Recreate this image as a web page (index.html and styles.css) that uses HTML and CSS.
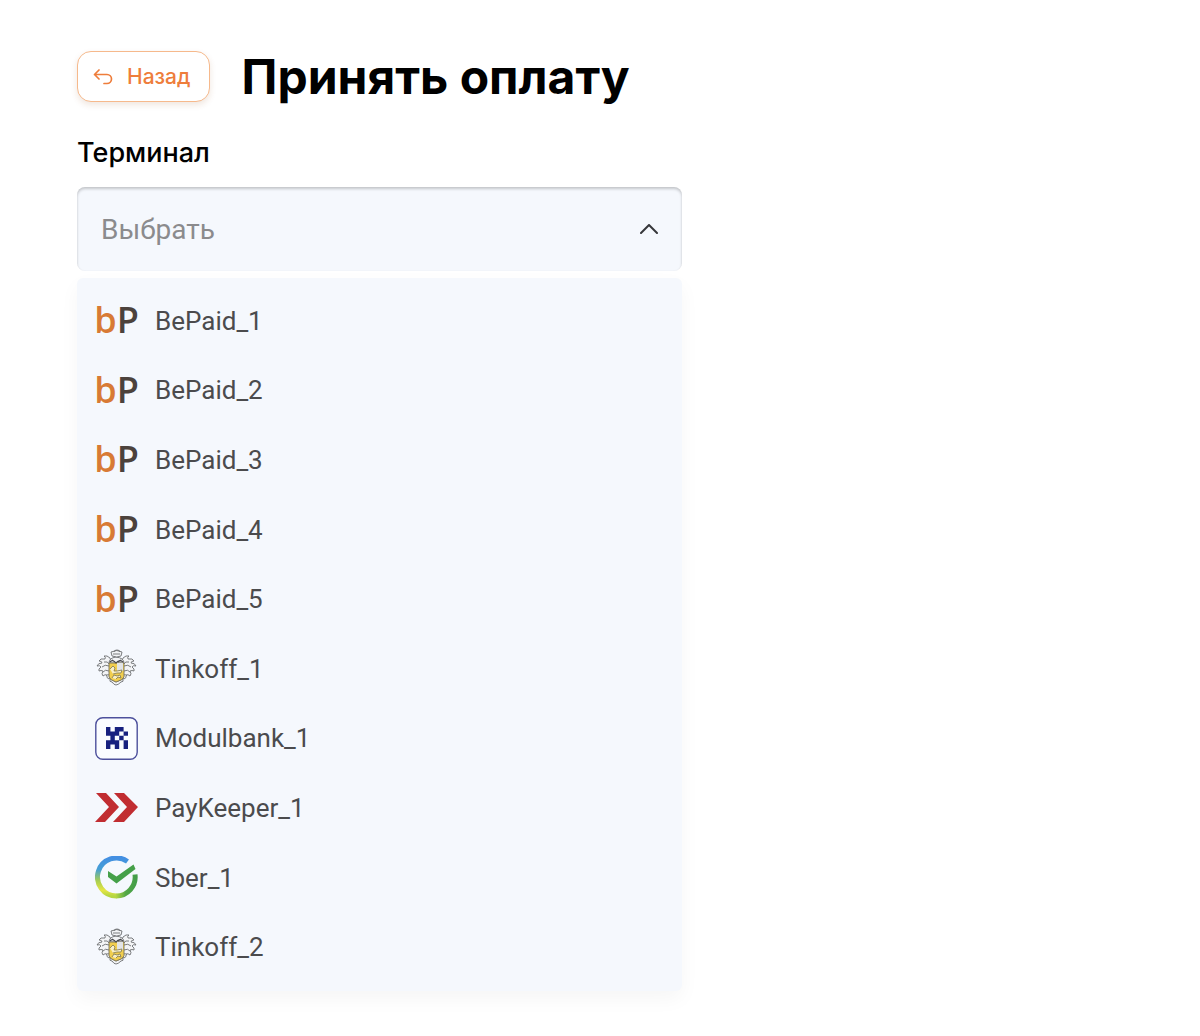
FILE: index.html
```html
<!DOCTYPE html>
<html lang="ru">
<head>
    <meta charset="UTF-8">
    <meta name="viewport" content="width=device-width, initial-scale=1.0">
    <title>Принять оплату</title>
    <link rel="stylesheet" href="styles.css">
</head>
<body>
    <!-- Общие иконки -->
    <svg class="sprite" aria-hidden="true">
        <symbol id="icon-tinkoff" viewBox="0 0 43 43">
            <g fill="#f3f4f6" stroke="#6d6f72" stroke-width="0.9" stroke-linejoin="round">
                <path d="M15 11q-3-3-6-2 2 1 1 3-5-1-6 2 3 0 3 2-4 0-5 3 3-1 4 1-3 2-2 4 2-1 4 0-2 3 0 5 2-2 4-1-1 3 2 4 1-2 3-1l2-8z"/>
                <path d="M28 11q3-3 6-2-2 1-1 3 5-1 6 2-3 0-3 2 4 0 5 3-3-1-4 1 3 2 2 4-2-1-4 0 2 3 0 5-2-2-4-1 1 3-2 4-1-2-3-1l-2-8z"/>
                <path d="M7 20q3-3 7-1M8 25q2-3 6-1M11 29q1-2 4-1M9 15q4-1 5 2"/>
                <path d="M36 20q-3-3-7-1M35 25q-2-3-6-1M32 29q-1-2-4-1M34 15q-4-1-5 2"/>
                <path d="M14 16q0-5 7-6 8 1 8 6z"/>
                <path d="M17 9l-1-4q6-3 11 0l-1 4q-4 2-9 0zM19 5q0-2 3-2t3 2M18 7h7"/>
                <path d="M15 32q-1 3 2 3 2 3 4 3t5-3q3 0 2-3l-7 3z"/>
            </g>
            <path d="M14 16h15v14q-1 3-8 5-6-2-7-5z" fill="#f1ce4e" stroke="#77715a" stroke-width="0.9"/>
            <path d="M22 16h6v8h-6z" fill="#e2e4e7"/>
            <path d="M15 22l3-3 2 2-1 3 3 0 5-1-1 3-4 0-4 1M17 31l2-3 3 1 3-1 1 3-3-1-2 2" fill="#f8efc8" stroke="#7d7652" stroke-width="0.8"/>
            <path d="M15 15q3-3 6 1 3-4 7-1M17 13l3 2M26 13l-3 2" fill="none" stroke="#48494c" stroke-width="1.2"/>
        </symbol>
    </svg>

    <main class="page">
        <header class="header">
            <button type="button" class="back-btn">
                <svg class="back-icon" viewBox="0 0 20 16" aria-hidden="true">
                    <path d="M6 1L1.5 5.5 6 10M1.5 5.5H14a4.5 4.5 0 0 1 0 9h-3"/>
                </svg>
                Назад
            </button>
            <h1>Принять оплату</h1>
        </header>

        <div class="form-group">
            <label for="terminal">Терминал</label>
            <div class="select-box">
                <select id="terminal">
                    <option value="">Выбрать</option>
                </select>
                <svg class="chevron" viewBox="0 0 18 10" aria-hidden="true">
                    <path d="M1 9l8-8 8 8"/>
                </svg>
            </div>

            <ul class="options">
                <li><button type="button" class="option"><span class="logo bepaid" aria-hidden="true"><span>b</span><b>P</b></span>BePaid_1</button></li>
                <li><button type="button" class="option"><span class="logo bepaid" aria-hidden="true"><span>b</span><b>P</b></span>BePaid_2</button></li>
                <li><button type="button" class="option"><span class="logo bepaid" aria-hidden="true"><span>b</span><b>P</b></span>BePaid_3</button></li>
                <li><button type="button" class="option"><span class="logo bepaid" aria-hidden="true"><span>b</span><b>P</b></span>BePaid_4</button></li>
                <li><button type="button" class="option"><span class="logo bepaid" aria-hidden="true"><span>b</span><b>P</b></span>BePaid_5</button></li>
                <li><button type="button" class="option"><svg class="logo" aria-hidden="true"><use href="#icon-tinkoff"/></svg>Tinkoff_1</button></li>
                <li>
                    <button type="button" class="option">
                        <svg class="logo" viewBox="0 0 43 43" aria-hidden="true">
                            <rect x="0.8" y="0.8" width="41.4" height="41.4" rx="7" fill="#fafcff" stroke="#4d509c" stroke-width="1.4"/>
                            <path transform="translate(11 10) scale(4.4)" fill="#17207f" d="M0 0h1v1h-1zM2 0h2v1h-2zM0 1h3v1h-3zM4 1h1v1h-1zM1 2h1v1h-1zM3 2h1v1h-1zM0 3h1v1h-1zM1 3h1v1h-1zM2 3h1v1h-1zM4 3h1v1h-1zM0 4h1v1h-1zM2 4h1v1h-1zM4 4h1v1h-1z"/>
                        </svg>
                        Modulbank_1
                    </button>
                </li>
                <li>
                    <button type="button" class="option">
                        <svg class="logo" viewBox="0 0 43 43" aria-hidden="true">
                            <path fill="#c12d31" d="M1 7h10l13 14-14 15H0l14-15zM19 7h10l14 14-14 15H18l14-15z"/>
                        </svg>
                        PayKeeper_1
                    </button>
                </li>
                <li>
                    <button type="button" class="option">
                        <svg class="logo" viewBox="0 0 43 43" aria-hidden="true">
                            <defs>
                                <linearGradient id="sber-left" x1="0" y1="0" x2="0" y2="1">
                                    <stop offset="0" stop-color="#438fe2"/>
                                    <stop offset="0.3" stop-color="#459fd4"/>
                                    <stop offset="0.6" stop-color="#a8ce51"/>
                                    <stop offset="0.85" stop-color="#e5e544"/>
                                    <stop offset="1" stop-color="#b5d642"/>
                                </linearGradient>
                                <linearGradient id="sber-right" x1="0" y1="0" x2="1" y2="0">
                                    <stop offset="0" stop-color="#b5d642"/>
                                    <stop offset="0.5" stop-color="#54a846"/>
                                    <stop offset="1" stop-color="#449e49"/>
                                </linearGradient>
                            </defs>
                            <g fill="none" stroke-width="5">
                                <path stroke="url(#sber-left)" d="M32.5 5.5A19 19 0 1 0 21.5 40"/>
                                <path stroke="url(#sber-right)" d="M21 40A19 19 0 0 0 40 18.5"/>
                            </g>
                            <path fill="#45a049" d="M13 15l8.500 5.500L38.500 8.500l2 4.500-19 14.500-8.500-6.500z"/>
                        </svg>
                        Sber_1
                    </button>
                </li>
                <li><button type="button" class="option"><svg class="logo" aria-hidden="true"><use href="#icon-tinkoff"/></svg>Tinkoff_2</button></li>
            </ul>
        </div>
    </main>
</body>
</html>
```

FILE: styles.css
```css
* { box-sizing: border-box; }
body {
    margin: 0;
    background: #fff;
    color: #000;
    font-family: Inter, 'Liberation Sans', sans-serif;
}
.sprite {
    position: absolute;
    width: 0;
    height: 0;
}
.page {
    padding: 47px 77px 44px;
}
.header {
    display: flex;
    align-items: center;
    gap: 32px;
}
h1 {
    margin: 0;
    font-size: 48px;
    line-height: 59px;
    font-weight: 700;
}
.back-btn {
    display: flex;
    align-items: center;
    gap: 14px;
    height: 51px;
    padding: 0 18px 0 15px;
    background: #fff;
    color: #ee7d3b;
    border: 1px solid #f6b98c;
    border-radius: 14px;
    box-shadow: 0 3px 6px rgba(150, 80, 30, 0.14);
    font-family: inherit;
    font-size: 21px;
    font-weight: 500;
    cursor: pointer;
}
.back-icon {
    width: 20px;
    height: 16px;
    fill: none;
    stroke: currentColor;
    stroke-width: 1.7;
    stroke-linecap: round;
    stroke-linejoin: round;
}
.form-group {
    max-width: 605px;
    margin-top: 29px;
}
label {
    display: block;
    margin-bottom: 17px;
    font-size: 27px;
    line-height: 35px;
    font-weight: 500;
}
.select-box {
    display: grid;
    align-items: center;
}
.select-box > * { grid-area: 1 / 1; }
select {
    width: 100%;
    height: 84px;
    padding: 0 60px 0 24px;
    appearance: none;
    background: #f5f8fd;
    border: none;
    border-radius: 8px;
    box-shadow: inset 0 2px 3px rgba(0, 0, 0, 0.2), inset 0 0 2px rgba(0, 0, 0, 0.04);
    color: #8b8b8d;
    font-family: Roboto, sans-serif;
    font-size: 28px;
}
.chevron {
    justify-self: end;
    width: 18px;
    height: 10px;
    margin-right: 24px;
    fill: none;
    stroke: #36373b;
    stroke-width: 2;
    stroke-linecap: round;
    stroke-linejoin: round;
    pointer-events: none;
}
.options {
    display: flex;
    flex-direction: column;
    min-height: 713px;
    margin: 7px 0 0;
    padding: 8px 0 9px;
    list-style: none;
    background: #f5f8fd;
    border-radius: 6px;
    box-shadow: 0 8px 20px rgba(0, 0, 0, 0.04);
}
.options li {
    display: flex;
    flex: 1;
}
.option {
    display: flex;
    align-items: center;
    gap: 17px;
    width: 100%;
    padding: 0 18px;
    background: none;
    border: none;
    color: #4b4b4d;
    font-family: Roboto, sans-serif;
    font-size: 26px;
    text-align: left;
    cursor: pointer;
}
.option:hover { background: #eaf0fb; }
.logo {
    flex: none;
    width: 43px;
    height: 43px;
}
.bepaid {
    display: flex;
    justify-content: center;
    color: #4c423c;
    font-family: 'Open Sans', sans-serif;
    font-size: 36px;
    font-weight: 600;
    line-height: 42px;
}
.bepaid span { color: #d87a35; }
.bepaid b { font-weight: 600; }
```
